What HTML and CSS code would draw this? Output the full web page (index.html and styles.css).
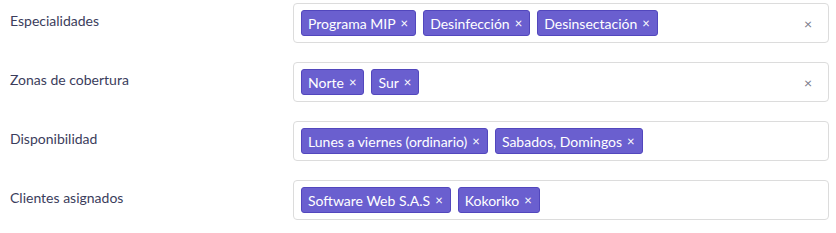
FILE: index.html
```html
<!DOCTYPE html>
<html>
<head>
    <link rel="stylesheet" href="styles.css">
</head>
<body>

<div class="form">
    <!-- Especialidades -->
    <div class="row">
        <label class="row-label">Especialidades</label>
        <div class="select">
            <div class="tags">
                <span class="tag">Programa MIP<span class="tag-x">×</span></span>
                <span class="tag">Desinfección<span class="tag-x">×</span></span>
                <span class="tag">Desinsectación<span class="tag-x">×</span></span>
            </div>
            <span class="clear">×</span>
        </div>
    </div>

    <!-- Zonas -->
    <div class="row">
        <label class="row-label">Zonas de cobertura</label>
        <div class="select">
            <div class="tags">
                <span class="tag">Norte<span class="tag-x">×</span></span>
                <span class="tag">Sur<span class="tag-x">×</span></span>
            </div>
            <span class="clear">×</span>
        </div>
    </div>

    <!-- Disponibilidad -->
    <div class="row">
        <label class="row-label">Disponibilidad</label>
        <div class="select">
            <div class="tags">
                <span class="tag">Lunes a viernes (ordinario)<span class="tag-x">×</span></span>
                <span class="tag">Sabados, Domingos<span class="tag-x">×</span></span>
            </div>
        </div>
    </div>

    <!-- Clientes -->
    <div class="row">
        <label class="row-label">Clientes asignados</label>
        <div class="select">
            <div class="tags">
                <span class="tag">Software Web S.A.S<span class="tag-x">×</span></span>
                <span class="tag">Kokoriko<span class="tag-x">×</span></span>
            </div>
        </div>
    </div>
</div>

</body>
</html>
```

FILE: styles.css
```css
/* General Styling */
body {
    font-family: Lato, "Open Sans", sans-serif;
    margin: 0;
    padding: 0;
    background-color: #fff;
}

.form {
    padding: 3px 7px 0 10px;
    display: flex;
    flex-direction: column;
    gap: 19px;
}

.row {
    display: flex;
    align-items: flex-start;
}

.row-label {
    width: 283px;
    padding-top: 9px;
    font-size: 14px;
    color: #3b3d5c;
}

.select {
    flex: 1;
    height: 40px;
    box-sizing: border-box;
    border: 1px solid #dcdcdc;
    border-radius: 4px;
    display: flex;
    align-items: center;
    padding: 0 16px 0 7px;
}

.tags {
    flex: 1;
    display: flex;
    gap: 7px;
}

.tag {
    background-color: #6a5fcf;
    border: 1px solid #5247bd;
    border-radius: 3px;
    color: #fff;
    font-size: 14px;
    height: 26px;
    box-sizing: border-box;
    padding: 0 7px 0 6px;
    display: flex;
    align-items: center;
}

.tag-x {
    margin-left: 5px;
    font-size: 13px;
}

.clear {
    color: #777a88;
    font-size: 14px;
}
```
